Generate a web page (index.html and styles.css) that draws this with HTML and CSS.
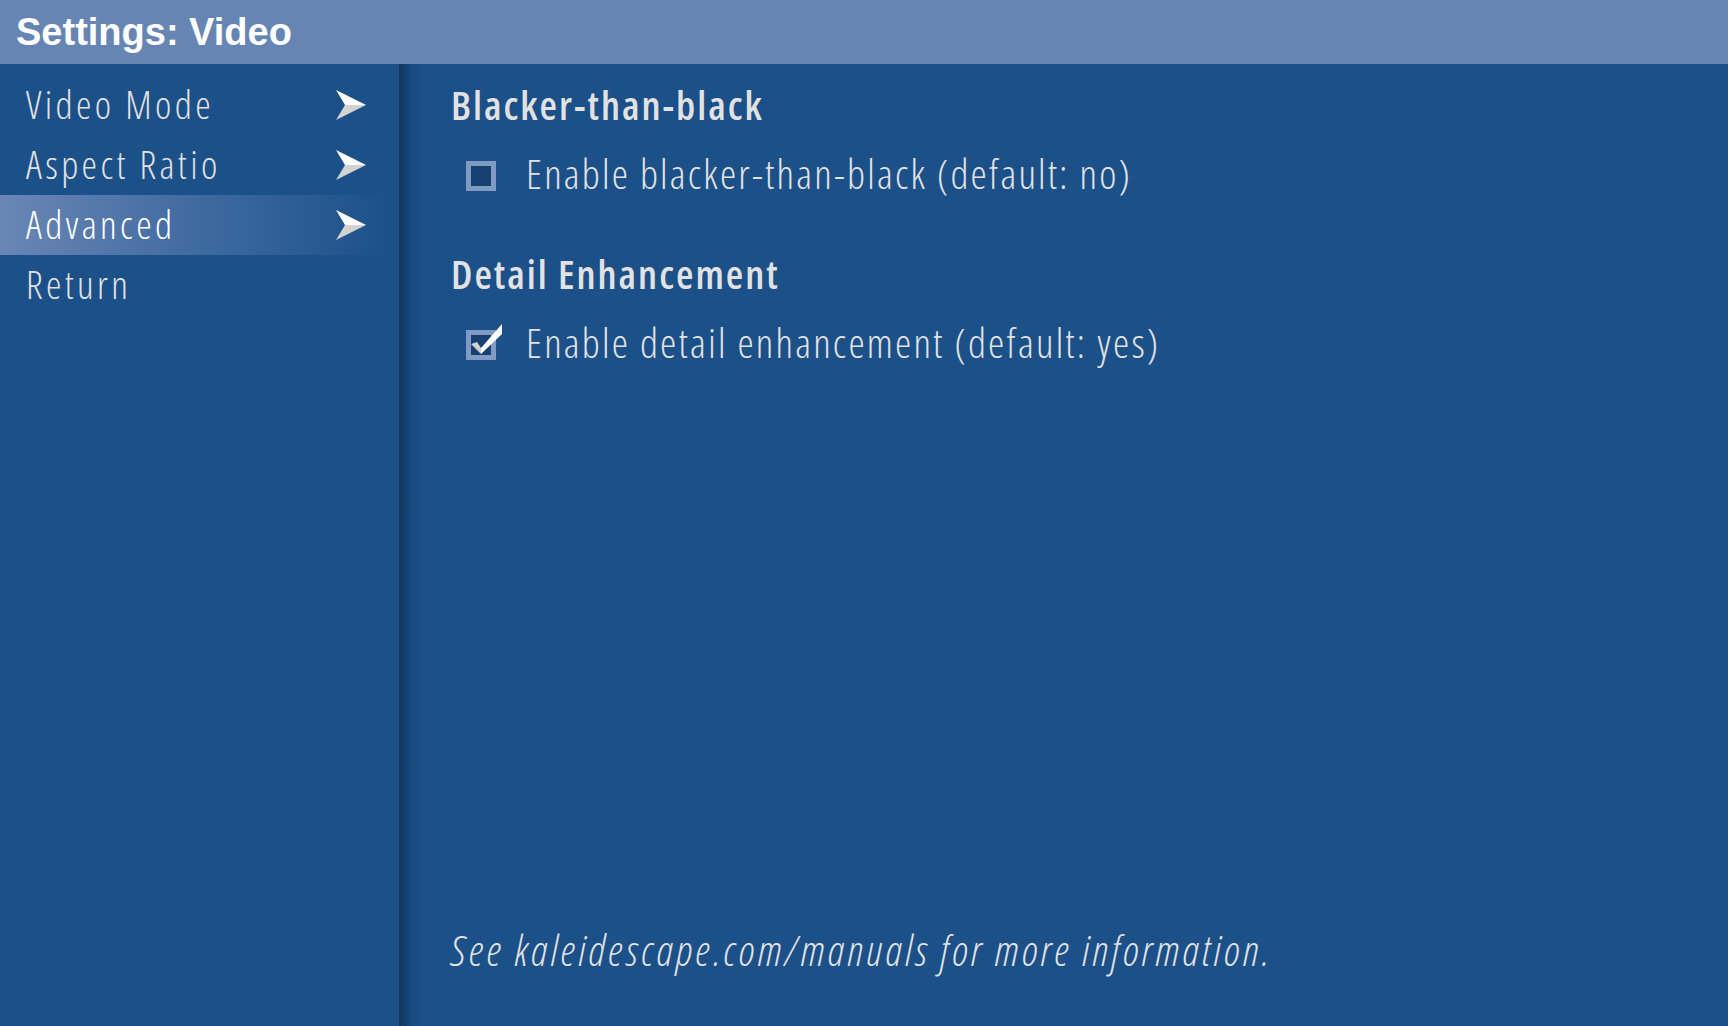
FILE: index.html
```html
<!DOCTYPE html>
<html lang="en">
<head>
    <meta charset="UTF-8">
    <title>Settings: Video</title>
    <link rel="stylesheet" href="styles.css">
</head>
<body>
    <div class="titlebar">Settings: Video</div>

    <div class="screen">
        <div class="sidebar">
            <div class="menu-item">
                <span>Video Mode</span>
                <svg class="arrow" width="30" height="30" viewBox="0 0 30 30"><polygon points="0,0 30,15 9,15" fill="#ffffff"/><polygon points="9,15 30,15 0,30" fill="#d2d2d2"/></svg>
            </div>
            <div class="menu-item">
                <span>Aspect Ratio</span>
                <svg class="arrow" width="30" height="30" viewBox="0 0 30 30"><polygon points="0,0 30,15 9,15" fill="#ffffff"/><polygon points="9,15 30,15 0,30" fill="#d2d2d2"/></svg>
            </div>
            <div class="menu-item selected">
                <span>Advanced</span>
                <svg class="arrow" width="30" height="30" viewBox="0 0 30 30"><polygon points="0,0 30,15 9,15" fill="#ffffff"/><polygon points="9,15 30,15 0,30" fill="#d2d2d2"/></svg>
            </div>
            <div class="menu-item">
                <span>Return</span>
            </div>
        </div>

        <div class="content">
            <h2>Blacker-than-black</h2>
            <div class="option">
                <span class="checkbox"></span>
                <span>Enable blacker-than-black (default: no)</span>
            </div>

            <h2 class="second">Detail Enhancement</h2>
            <div class="option">
                <span class="checkbox checked">
                    <svg class="tick" width="40" height="40" viewBox="0 0 40 40"><polygon points="5,20 11,18 15,24 15,30" fill="#d2d2d2"/><polygon points="15,24 36,0 36,10 15,30" fill="#ffffff"/></svg>
                </span>
                <span>Enable detail enhancement (default: yes)</span>
            </div>

            <p class="footer">See kaleidescape.com/manuals for more information.</p>
        </div>
    </div>
</body>
</html>
```

FILE: styles.css
```css
html, body {
    margin: 0;
    height: 100%;
}
body {
    background: #1b5089;
    color: #e2e2e2;
    font-family: "Open Sans", sans-serif;
    font-stretch: 75%;
    overflow: hidden;
}
.titlebar {
    height: 64px;
    box-sizing: border-box;
    padding: 9px 0 0 16px;
    background: #6785b3;
    color: #ffffff;
    font-family: "Liberation Sans", Arial, sans-serif;
    font-stretch: normal;
    font-weight: bold;
    font-size: 38px;
    line-height: 46px;
}
.screen {
    display: flex;
    height: 962px;
}
.sidebar {
    width: 399px;
    padding-top: 11px;
    box-sizing: border-box;
}
.menu-item {
    height: 60px;
    box-sizing: border-box;
    display: flex;
    align-items: center;
    justify-content: space-between;
    padding: 0 33px 4px 26px;
    font-size: 39px;
    font-weight: 360;
    letter-spacing: 3.4px;
}
.menu-item .arrow {
    margin-top: 4px;
}
.menu-item.selected {
    background: linear-gradient(to right, #6a87b5 0%, #3f6aa0 50%, #1b5089 98%);
    color: #ffffff;
}
.content {
    flex: 1;
    display: flex;
    flex-direction: column;
    padding: 16px 0 51px 52px;
    background: linear-gradient(to right, rgba(8, 30, 60, 0.55) 0, rgba(8, 30, 60, 0.15) 12px, rgba(8, 30, 60, 0) 22px);
}
h2 {
    margin: 0;
    font-size: 40px;
    line-height: 50px;
    font-weight: 600;
    letter-spacing: 2px;
}
h2.second {
    margin-top: 51px;
}
.option {
    display: flex;
    align-items: center;
    gap: 30px;
    height: 50px;
    margin-top: 18px;
    padding-left: 15px;
    font-size: 41px;
    font-weight: 360;
    letter-spacing: 2.2px;
}
.checkbox {
    position: relative;
    width: 30px;
    height: 30px;
    box-sizing: border-box;
    border: 5px solid #7f9bc3;
    background: #173f6f;
    margin-top: 6px;
}
.tick {
    position: absolute;
    left: -5px;
    top: -11px;
}
.footer {
    margin: auto 0 0;
    font-size: 42px;
    line-height: 50px;
    font-style: italic;
    font-weight: 360;
    letter-spacing: 3.1px;
}
```
